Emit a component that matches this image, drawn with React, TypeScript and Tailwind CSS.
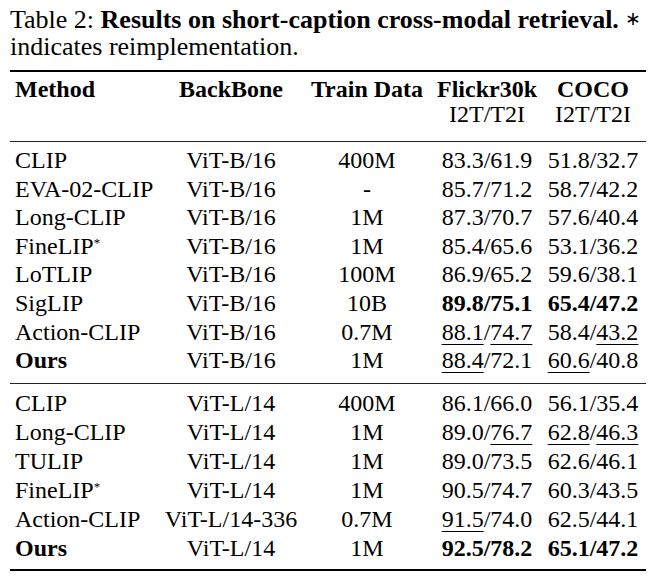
import React from 'react'

const cols = 'grid grid-cols-[152px_138px_134px_106px_106px]'

const U: React.FC<{ children: React.ReactNode }> = ({ children }) => (
  <span className='underline decoration-1 underline-offset-[4px]'>{children}</span>
)

type Row = {
  method: React.ReactNode
  backbone: string
  data: string
  flickr: React.ReactNode
  coco: React.ReactNode
}

const star = <sup className='text-[13px]'>*</sup>

const baseRows: Row[] = [
  { method: 'CLIP', backbone: 'ViT-B/16', data: '400M', flickr: '83.3/61.9', coco: '51.8/32.7' },
  { method: 'EVA-02-CLIP', backbone: 'ViT-B/16', data: '-', flickr: '85.7/71.2', coco: '58.7/42.2' },
  { method: 'Long-CLIP', backbone: 'ViT-B/16', data: '1M', flickr: '87.3/70.7', coco: '57.6/40.4' },
  { method: <>FineLIP{star}</>, backbone: 'ViT-B/16', data: '1M', flickr: '85.4/65.6', coco: '53.1/36.2' },
  { method: 'LoTLIP', backbone: 'ViT-B/16', data: '100M', flickr: '86.9/65.2', coco: '59.6/38.1' },
  {
    method: 'SigLIP', backbone: 'ViT-B/16', data: '10B',
    flickr: <b>89.8/75.1</b>, coco: <b>65.4/47.2</b>,
  },
  {
    method: 'Action-CLIP', backbone: 'ViT-B/16', data: '0.7M',
    flickr: <><U>88.1</U>/<U>74.7</U></>, coco: <>58.4/<U>43.2</U></>,
  },
  {
    method: <b>Ours</b>, backbone: 'ViT-B/16', data: '1M',
    flickr: <><U>88.4</U>/72.1</>, coco: <><U>60.6</U>/40.8</>,
  },
]

const largeRows: Row[] = [
  { method: 'CLIP', backbone: 'ViT-L/14', data: '400M', flickr: '86.1/66.0', coco: '56.1/35.4' },
  {
    method: 'Long-CLIP', backbone: 'ViT-L/14', data: '1M',
    flickr: <>89.0/<U>76.7</U></>, coco: <><U>62.8</U>/<U>46.3</U></>,
  },
  { method: 'TULIP', backbone: 'ViT-L/14', data: '1M', flickr: '89.0/73.5', coco: '62.6/46.1' },
  { method: <>FineLIP{star}</>, backbone: 'ViT-L/14', data: '1M', flickr: '90.5/74.7', coco: '60.3/43.5' },
  {
    method: 'Action-CLIP', backbone: 'ViT-L/14-336', data: '0.7M',
    flickr: <><U>91.5</U>/74.0</>, coco: '62.5/44.1',
  },
  {
    method: <b>Ours</b>, backbone: 'ViT-L/14', data: '1M',
    flickr: <b>92.5/78.2</b>, coco: <b>65.1/47.2</b>,
  },
]

const TableRow: React.FC<{ row: Row }> = ({ row }) => (
  <div className={cols}>
    <div className='pl-[5px] whitespace-nowrap'>{row.method}</div>
    <div className='text-center whitespace-nowrap'>{row.backbone}</div>
    <div className='text-center whitespace-nowrap'>{row.data}</div>
    <div className='text-center whitespace-nowrap'>{row.flickr}</div>
    <div className='text-center whitespace-nowrap'>{row.coco}</div>
  </div>
)

export default function App() {
  return (
    <div className="w-[657px] h-[579px] bg-white text-black font-['Liberation_Serif',serif] pl-[10px] pr-[11px] overflow-hidden">
      {/* caption */}
      <p className='text-[26px] leading-[27px] pt-[5px] whitespace-nowrap'>
        Table 2: <b>Results on short-caption cross-modal retrieval.</b>{' '}
        <span className='text-[19px] align-[3px]'>∗</span>
        <br />
        indicates reimplementation.
      </p>

      <div className='mt-[10px] h-[2px] bg-black'></div>

      {/* header */}
      <div className={`${cols} text-[24px] leading-[25px] font-bold pt-[5px] pb-[14px]`}>
        <div className='pl-[5px]'>Method</div>
        <div className='text-center'>BackBone</div>
        <div className='text-center whitespace-nowrap'>Train Data</div>
        <div className='flex flex-col items-center'>
          <span>Flickr30k</span>
          <span className='font-normal'>I2T/T2I</span>
        </div>
        <div className='flex flex-col items-center'>
          <span>COCO</span>
          <span className='font-normal'>I2T/T2I</span>
        </div>
      </div>

      <div className='h-px bg-[#222]'></div>

      <div className='text-[24px] leading-[28.6px] pt-[4px] pb-[8px]'>
        {baseRows.map((r, i) => (
          <TableRow key={i} row={r} />
        ))}
      </div>

      <div className='h-px bg-[#222]'></div>

      <div className='text-[24px] leading-[29px] pt-[5px] pb-[6px]'>
        {largeRows.map((r, i) => (
          <TableRow key={i} row={r} />
        ))}
      </div>

      <div className='h-[2px] bg-black'></div>
    </div>
  )
}
